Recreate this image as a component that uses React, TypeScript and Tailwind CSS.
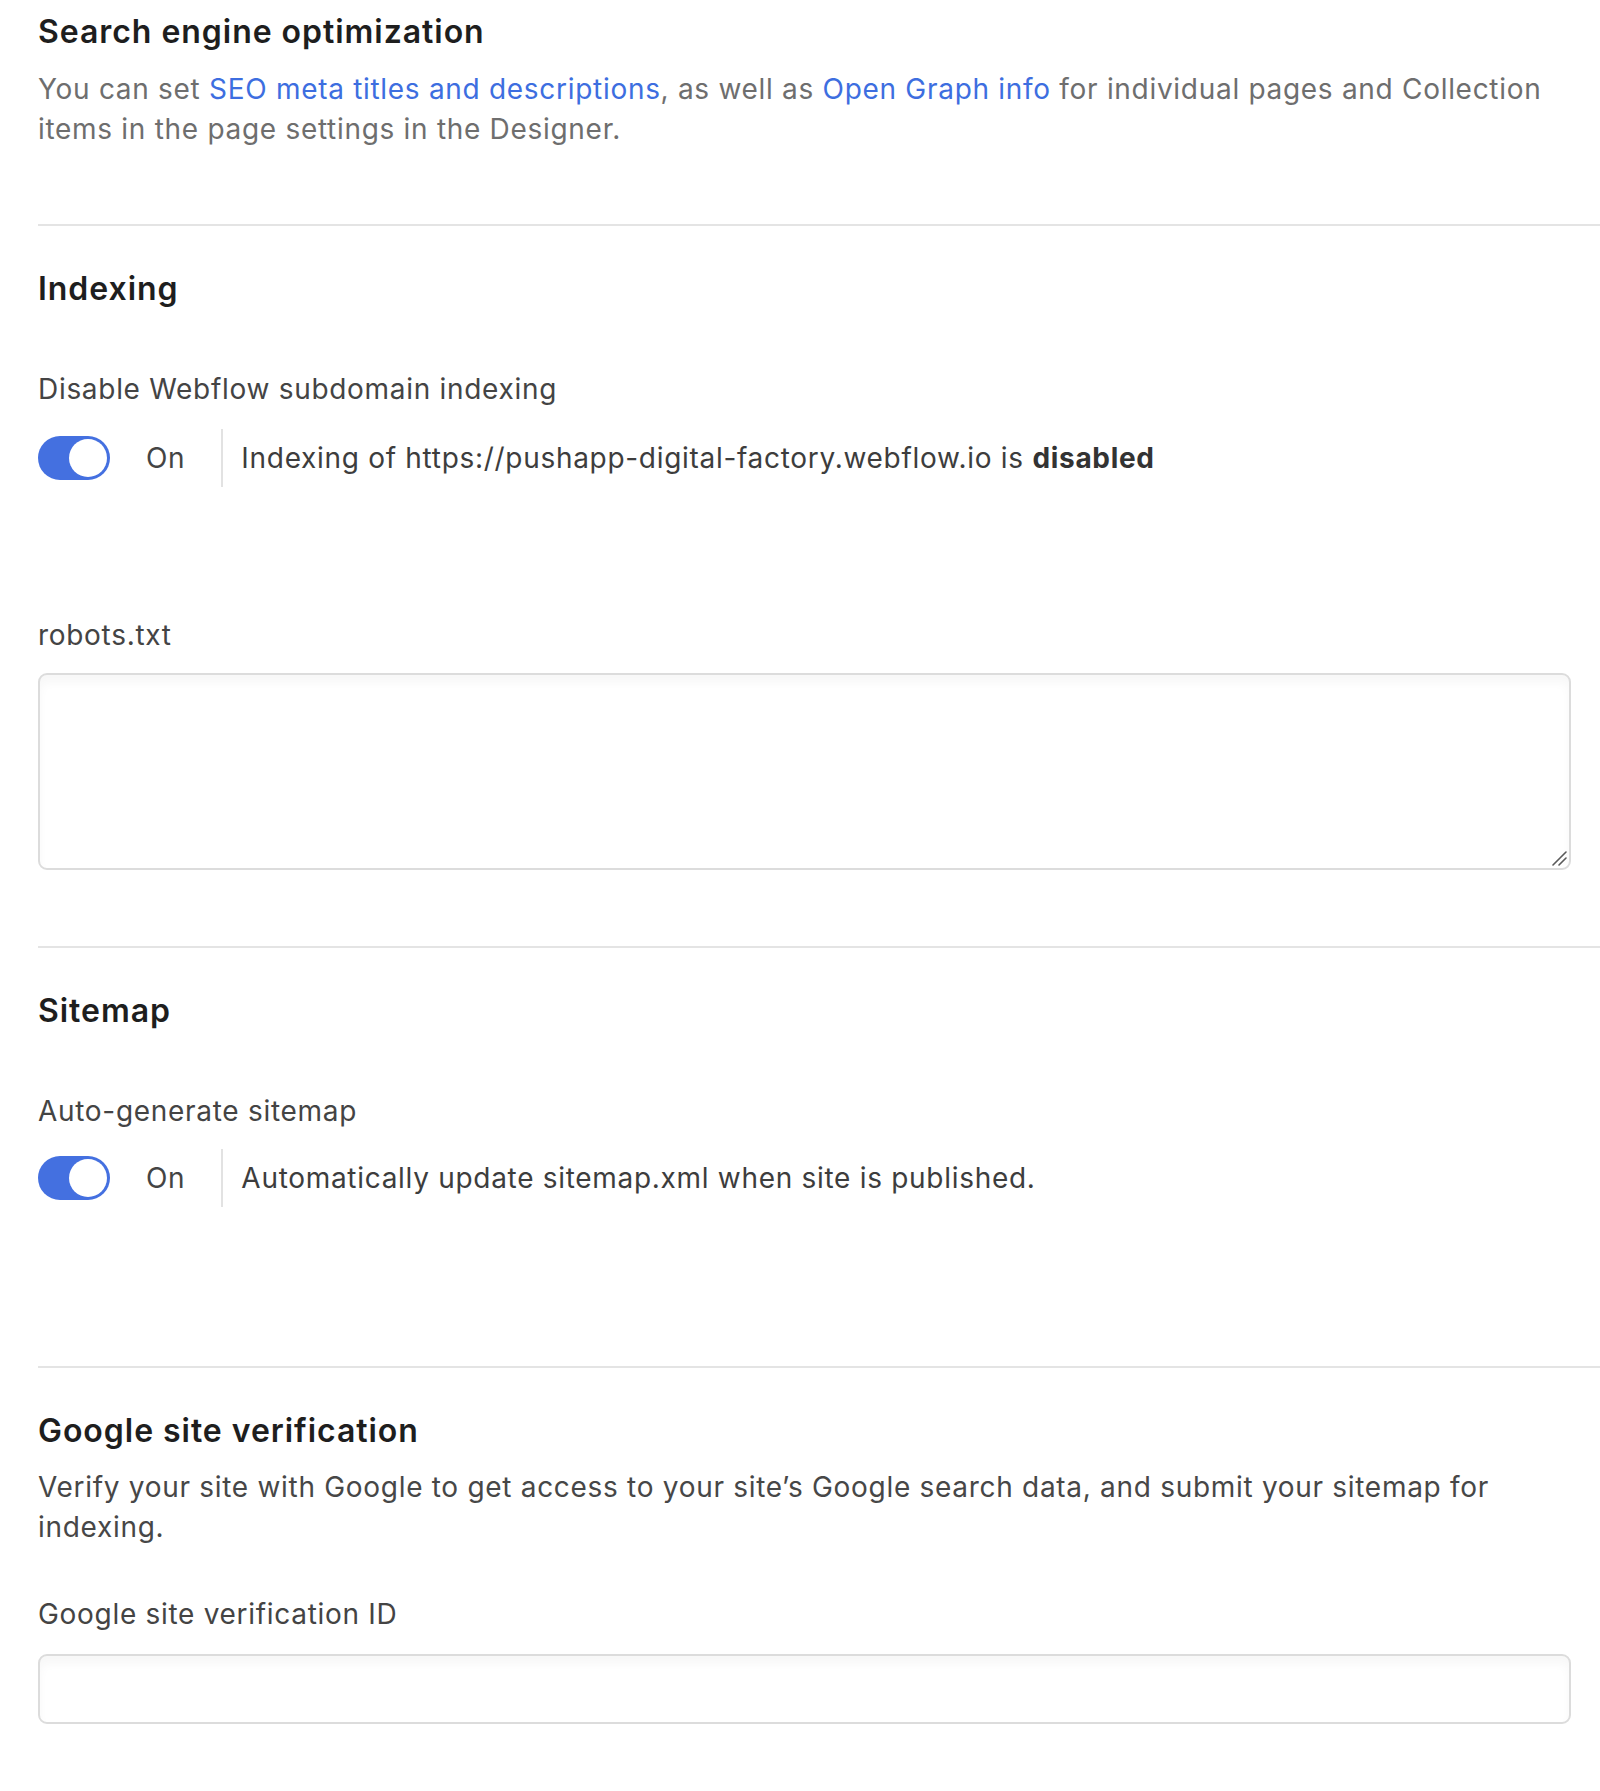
interface ToggleRowProps {
  children: React.ReactNode
}

function ToggleRow({ children }: ToggleRowProps) {
  return (
    <div className="flex items-center h-[58px]">
      {/* Switch */}
      <div className="w-[72px] h-[44px] rounded-full bg-[#4470e0] flex items-center justify-end px-[3px] shrink-0">
        <div className="w-[38px] h-[38px] rounded-full bg-white" />
      </div>
      <span className="ml-[36px] text-[28px] leading-[40px] tracking-[0.025em] text-[#444]">On</span>
      <div className="ml-[36px] w-[2px] self-stretch bg-[#e2e2e2]" />
      <span className="ml-[18px] text-[28px] leading-[40px] tracking-[0.025em] text-[#3d3d3d]">{children}</span>
    </div>
  )
}

function Divider({ className }: { className: string }) {
  return <div className={`h-[2px] bg-[#e4e4e4] ${className}`} />
}

export default function App() {
  return (
    <div
      className="w-[1600px] min-h-[1791px] bg-white pl-[38px] pt-[12px] antialiased"
      style={{ fontFamily: 'Inter, "Noto Sans", "Liberation Sans", sans-serif' }}
    >
      {/* Search engine optimization */}
      <h2 className="text-[32px] leading-[40px] font-semibold tracking-[0.03em] text-[#1e1e1e]">
        Search engine optimization
      </h2>
      <p className="mt-[17px] mr-[30px] text-[28px] leading-[40px] tracking-[0.025em] text-[#6e6e6e]">
        You can set <a className="text-[#3d6ee0]">SEO meta titles and descriptions</a>, as well as{' '}
        <a className="text-[#3d6ee0]">Open Graph info</a> for individual pages and Collection items in the page
        settings in the Designer.
      </p>

      <Divider className="mt-[75px]" />

      {/* Indexing */}
      <h2 className="mt-[43px] text-[32px] leading-[40px] font-semibold tracking-[0.03em] text-[#1e1e1e]">Indexing</h2>
      <div className="mt-[60px] text-[28px] leading-[40px] tracking-[0.025em] text-[#444]">
        Disable Webflow subdomain indexing
      </div>
      <div className="mt-[20px]">
        <ToggleRow>
          Indexing of https://pushapp-digital-factory.webflow.io is <b className="font-bold text-[#333]">disabled</b>
        </ToggleRow>
      </div>

      <div className="mt-[128px] text-[28px] leading-[40px] tracking-[0.025em] text-[#444]">robots.txt</div>
      <div className="relative mt-[18px] w-[1533px]">
        <textarea className="block w-full h-[197px] resize-none rounded-[9px] border-2 border-[#dcdcdc] bg-white shadow-[inset_0_8px_10px_rgba(0,0,0,0.03)] outline-none" />
        {/* resize grip */}
        <svg className="absolute right-[4px] bottom-[4px] w-[16px] h-[16px]" viewBox="0 0 16 16">
          <path d="M2 15 L15 2 M8 15 L15 8" stroke="#5a5a5a" strokeWidth="1.6" strokeLinecap="round" fill="none" />
        </svg>
      </div>

      <Divider className="mt-[76px]" />

      {/* Sitemap */}
      <h2 className="mt-[43px] text-[32px] leading-[40px] font-semibold tracking-[0.03em] text-[#1e1e1e]">Sitemap</h2>
      <div className="mt-[60px] text-[28px] leading-[40px] tracking-[0.025em] text-[#444]">Auto-generate sitemap</div>
      <div className="mt-[18px]">
        <ToggleRow>Automatically update sitemap.xml when site is published.</ToggleRow>
      </div>

      <Divider className="mt-[159px]" />

      {/* Google site verification */}
      <h2 className="mt-[43px] text-[32px] leading-[40px] font-semibold tracking-[0.03em] text-[#1e1e1e]">
        Google site verification
      </h2>
      <p className="mt-[16px] mr-[30px] text-[28px] leading-[40px] tracking-[0.025em] text-[#474747]">
        Verify your site with Google to get access to your site’s Google search data, and submit your sitemap for
        indexing.
      </p>

      <div className="mt-[47px] text-[28px] leading-[40px] tracking-[0.025em] text-[#444]">
        Google site verification ID
      </div>
      <input
        type="text"
        className="mt-[20px] block w-[1533px] h-[70px] rounded-[9px] border-2 border-[#dcdcdc] bg-white shadow-[inset_0_8px_10px_rgba(0,0,0,0.03)] outline-none"
      />
    </div>
  )
}
